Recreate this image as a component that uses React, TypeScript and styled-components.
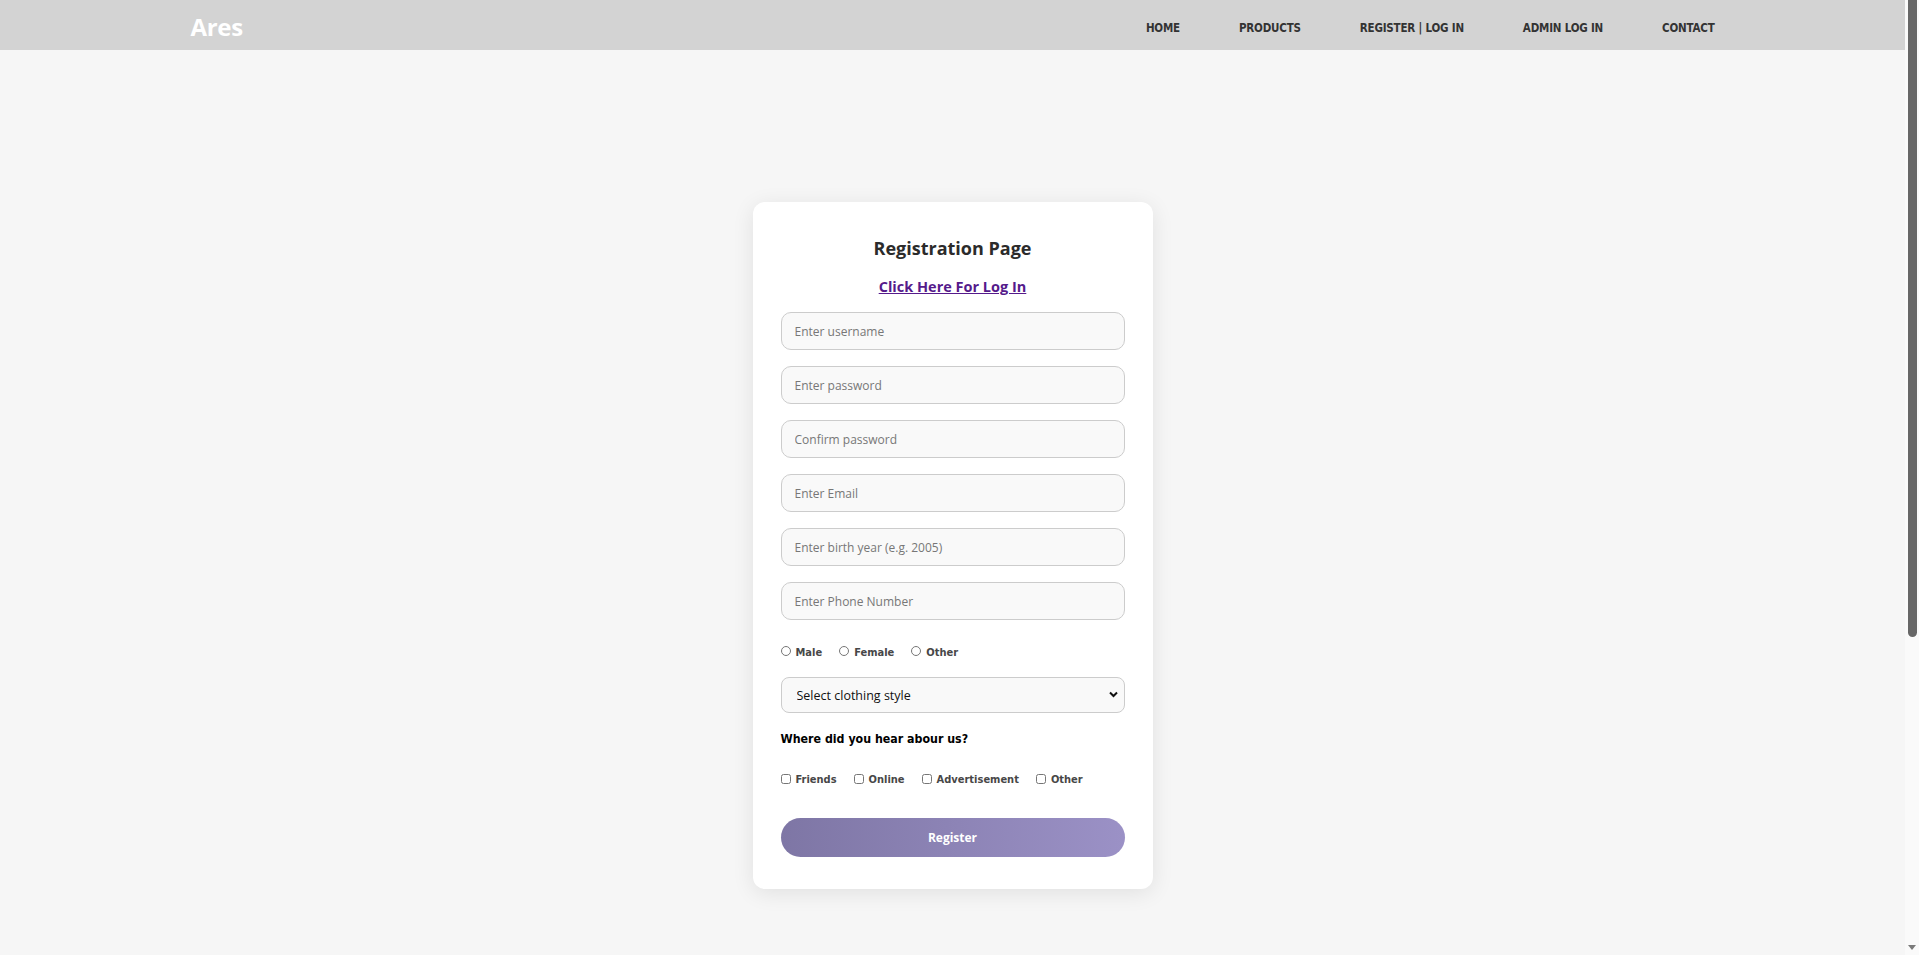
import React from "react";
import styled, { createGlobalStyle } from "styled-components";

const GlobalStyle = createGlobalStyle`
  html, body {
    margin: 0;
    padding: 0;
    background: #f6f6f6;
    font-family: "Open Sans", "Noto Sans", sans-serif;
  }
  * { box-sizing: border-box; }
`;

const Page = styled.div`
  min-height: 1410px;
  margin-right: 14px;
  display: flex;
  flex-direction: column;
`;

const ScrollTrack = styled.div`
  position: fixed;
  top: 0;
  right: 0;
  bottom: 0;
  width: 14px;
  background: #fafafa;
  z-index: 10;
`;

const ScrollThumb = styled.div`
  position: absolute;
  top: 0;
  left: 3px;
  width: 9px;
  height: 637px;
  background: #676767;
  border-radius: 0 0 5px 5px;
`;

const ScrollArrow = styled.div`
  position: absolute;
  bottom: 5px;
  left: 3px;
  width: 0;
  height: 0;
  border-left: 4px solid transparent;
  border-right: 4px solid transparent;
  border-top: 5px solid #7a7a7a;
`;

const NavBar = styled.header`
  height: 50px;
  background: #d3d3d3;
  display: flex;
  align-items: center;
  padding: 0 10%;
`;

const Logo = styled.div`
  color: #ffffff;
  font-family: "Open Sans", sans-serif;
  font-weight: 700;
  font-size: 24px;
  letter-spacing: -0.3px;
  line-height: 1;
  margin-top: 3px;
`;

const NavList = styled.nav`
  margin-left: auto;
  display: flex;
  align-items: center;
  gap: 59px;
`;

const NavLink = styled.a`
  font-family: "Liberation Sans Narrow", "DejaVu Sans Condensed", "Liberation Sans", sans-serif;
  font-weight: 700;
  font-size: 11.5px;
  color: #333333;
  text-decoration: none;
  text-transform: uppercase;
  letter-spacing: -0.2px;
  margin-top: 6px;
  cursor: pointer;
`;

const Main = styled.main`
  display: flex;
  justify-content: center;
  padding-top: 152px;
`;

const Card = styled.div`
  width: 400px;
  background: #ffffff;
  border-radius: 12px;
  box-shadow: 0 4px 22px rgba(0, 0, 0, 0.09);
  padding: 32px 28px 32px;
  display: flex;
  flex-direction: column;
`;

const Title = styled.h2`
  margin: 0;
  text-align: center;
  font-family: "Open Sans", sans-serif;
  font-weight: 700;
  font-size: 18px;
  line-height: 28px;
  color: #2b2b2b;
`;

const LoginLink = styled.a`
  display: block;
  margin-top: 15px;
  text-align: center;
  font-family: "Open Sans", sans-serif;
  font-weight: 700;
  font-size: 14.5px;
  line-height: 20px;
  color: #551a8b;
  text-decoration: underline;
  cursor: pointer;
`;

const Field = styled.input<{ $mt: number }>`
  display: block;
  width: 100%;
  height: 38px;
  margin: ${(p) => p.$mt}px 0 0;
  padding: 0 13px;
  background: #f9f9f9;
  border: 1px solid #cccccc;
  border-radius: 10px;
  font-family: "Open Sans", sans-serif;
  font-size: 12px;
  color: #333;
  outline: none;
  &::placeholder { color: #777777; }
`;

const OptionRow = styled.div<{ $mt: number }>`
  margin-top: ${(p) => p.$mt}px;
  height: 16px;
  display: flex;
  align-items: center;
  gap: 17px;
`;

const OptionLabel = styled.label`
  display: inline-flex;
  align-items: center;
  gap: 5px;
  font-family: "DejaVu Sans Condensed", "DejaVu Sans", sans-serif;
  font-weight: 700;
  font-size: 11px;
  color: #474747;
`;

const Radio = styled.input`
  width: 10px;
  height: 10px;
  margin: -2px 0 0 0;
`;

const Check = styled.input`
  width: 10px;
  height: 10px;
  margin: -1px 0 0 0;
`;

const SelectWrap = styled.div<{ $mt: number }>`
  position: relative;
  margin-top: ${(p) => p.$mt}px;
`;

const Select = styled.select`
  appearance: none;
  display: block;
  width: 100%;
  height: 36px;
  padding: 0 15px;
  background: #f9f9f9;
  border: 1px solid #cccccc;
  border-radius: 8px;
  font-family: "Open Sans", sans-serif;
  font-size: 12.5px;
  color: #111;
  outline: none;
`;

const Chevron = styled.svg`
  position: absolute;
  right: 7px;
  top: 14px;
  width: 9px;
  height: 7px;
  pointer-events: none;
`;

const Question = styled.div<{ $mt: number }>`
  margin-top: ${(p) => p.$mt}px;
  line-height: 16px;
  font-family: "DejaVu Sans Condensed", "DejaVu Sans", sans-serif;
  font-weight: 700;
  font-size: 12.3px;
  color: #000;
`;

const RegisterButton = styled.button<{ $mt: number }>`
  margin-top: ${(p) => p.$mt}px;
  width: 100%;
  height: 39px;
  border: none;
  border-radius: 20px;
  background: linear-gradient(to right, #7e76a5, #9b91c6);
  color: #ffffff;
  font-family: "Open Sans", sans-serif;
  font-weight: 700;
  font-size: 12px;
  cursor: pointer;
`;

const navItems = ["Home", "Products", "Register | Log In", "Admin Log In", "Contact"];
const fields = [
  "Enter username",
  "Enter password",
  "Confirm password",
  "Enter Email",
  "Enter birth year (e.g. 2005)",
  "Enter Phone Number",
];

export default function App() {
  return (
    <>
      <GlobalStyle />
      <Page>
        <NavBar>
          <Logo>Ares</Logo>
          <NavList>
            {navItems.map((n) => (
              <NavLink key={n}>{n}</NavLink>
            ))}
          </NavList>
        </NavBar>
        <Main>
          <Card>
            <Title>Registration Page</Title>
            <LoginLink>Click Here For Log In</LoginLink>
            {fields.map((f, i) => (
              <Field
                key={f}
                $mt={i === 0 ? 15 : 16}
                type={f.includes("password") ? "password" : "text"}
                placeholder={f}
              />
            ))}
            <OptionRow $mt={24}>
              {["Male", "Female", "Other"].map((g) => (
                <OptionLabel key={g}>
                  <Radio type="radio" name="gender" />
                  {g}
                </OptionLabel>
              ))}
            </OptionRow>
            <SelectWrap $mt={17}>
              <Select defaultValue="">
                <option value="">Select clothing style</option>
                <option>Casual</option>
                <option>Formal</option>
                <option>Sport</option>
              </Select>
              <Chevron viewBox="0 0 9 7">
                <path d="M1 1.5 L4.5 5 L8 1.5" fill="none" stroke="#111" strokeWidth="2" />
              </Chevron>
            </SelectWrap>
            <Question $mt={18}>Where did you hear abour us?</Question>
            <OptionRow $mt={24}>
              {["Friends", "Online", "Advertisement", "Other"].map((c) => (
                <OptionLabel key={c}>
                  <Check type="checkbox" />
                  {c}
                </OptionLabel>
              ))}
            </OptionRow>
            <RegisterButton $mt={31}>Register</RegisterButton>
          </Card>
        </Main>
      </Page>
      <ScrollTrack aria-hidden>
        <ScrollThumb />
        <ScrollArrow />
      </ScrollTrack>
    </>
  );
}
